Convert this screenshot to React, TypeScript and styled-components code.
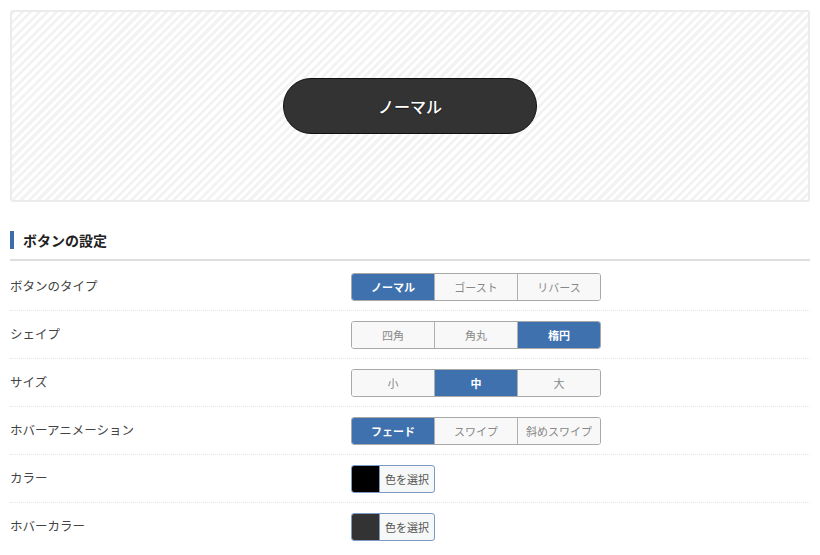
import React from 'react';
import styled, { createGlobalStyle } from 'styled-components';

const GlobalStyle = createGlobalStyle`
  html, body {
    margin: 0;
    padding: 0;
    background: #fff;
  }
  body {
    font-family: "Noto Sans CJK JP", "Noto Sans", sans-serif;
    color: #333;
  }
`;

type Option = { label: string; active?: boolean };

const SETTINGS: { label: string; options?: Option[]; color?: string }[] = [
  {
    label: 'ボタンのタイプ',
    options: [{ label: 'ノーマル', active: true }, { label: 'ゴースト' }, { label: 'リバース' }],
  },
  {
    label: 'シェイプ',
    options: [{ label: '四角' }, { label: '角丸' }, { label: '楕円', active: true }],
  },
  {
    label: 'サイズ',
    options: [{ label: '小' }, { label: '中', active: true }, { label: '大' }],
  },
  {
    label: 'ホバーアニメーション',
    options: [{ label: 'フェード', active: true }, { label: 'スワイプ' }, { label: '斜めスワイプ' }],
  },
  { label: 'カラー', color: '#000000' },
  { label: 'ホバーカラー', color: '#333333' },
];

const App = () => {
  return (
    <>
      <GlobalStyle />
      <Page>
        <Preview>
          <PreviewButton>ノーマル</PreviewButton>
        </Preview>
        <SectionTitle>ボタンの設定</SectionTitle>
        <List>
          {SETTINGS.map((row) => (
            <Row key={row.label}>
              <Label>{row.label}</Label>
              <Control>
                {row.options && (
                  <Segments>
                    {row.options.map((opt) => (
                      <Segment key={opt.label} $active={opt.active}>
                        {opt.label}
                      </Segment>
                    ))}
                  </Segments>
                )}
                {row.color && (
                  <ColorPicker>
                    <Swatch $color={row.color} />
                    <ColorText>色を選択</ColorText>
                  </ColorPicker>
                )}
              </Control>
            </Row>
          ))}
        </List>
      </Page>
    </>
  );
};

const Page = styled.div`
  padding: 10px 10px 0;
`;

const Preview = styled.div`
  height: 188px;
  border: 2px solid #ececec;
  border-radius: 3px;
  background: repeating-linear-gradient(
    -45deg,
    #ffffff 0,
    #ffffff 3px,
    #f3f3f3 3px,
    #f3f3f3 6px
  );
  display: flex;
  align-items: center;
  justify-content: center;
`;

const PreviewButton = styled.div`
  width: 254px;
  height: 56px;
  box-sizing: border-box;
  border: 1px solid #111;
  border-radius: 28px;
  background: #333;
  color: #fff;
  font-size: 16px;
  font-weight: 500;
  display: flex;
  align-items: center;
  justify-content: center;
  text-shadow: 0 1px 1px rgba(0, 0, 0, 0.6);
`;

const SectionTitle = styled.h2`
  margin: 28px 0 0;
  padding: 0 0 9px 13px;
  position: relative;
  font-size: 14px;
  font-weight: bold;
  line-height: 20px;
  color: #222;
  border-bottom: 2px solid #dedede;
  &::before {
    content: '';
    position: absolute;
    left: 0;
    top: 1px;
    width: 4px;
    height: 18px;
    background: #3b6ea8;
  }
`;

const List = styled.div`
  padding-top: 2px;
`;

const Row = styled.div`
  display: grid;
  grid-template-columns: 341px 1fr;
  align-items: center;
  padding: 10px 0 9px;
  border-bottom: 1px dotted #e4e4e4;
  &:last-child {
    border-bottom: none;
  }
`;

const Label = styled.div`
  font-size: 12.5px;
  color: #444;
  margin-top: -3px;
`;

const Control = styled.div`
  display: flex;
  align-items: center;
`;

const Segments = styled.div`
  display: flex;
  border: 1px solid #a8a8a8;
  border-radius: 3px;
  overflow: hidden;
`;

const Segment = styled.div<{ $active?: boolean }>`
  width: 82px;
  height: 26px;
  display: flex;
  align-items: center;
  justify-content: center;
  font-size: 11px;
  background: ${({ $active }) => ($active ? '#3e71ad' : '#f8f8f8')};
  color: ${({ $active }) => ($active ? '#fff' : '#888')};
  font-weight: ${({ $active }) => ($active ? 'bold' : 'normal')};
  & + & {
    border-left: 1px solid #b0b0b0;
  }
`;

const ColorPicker = styled.div`
  display: flex;
  height: 28px;
  box-sizing: border-box;
  border: 1px solid #7d9ac2;
  border-radius: 3px;
  overflow: hidden;
  background: #f6f7f7;
`;

const Swatch = styled.div<{ $color: string }>`
  width: 27px;
  background: ${({ $color }) => $color};
  border-right: 1px solid #7d9ac2;
`;

const ColorText = styled.div`
  width: 54px;
  display: flex;
  align-items: center;
  justify-content: center;
  font-size: 11px;
  color: #555;
`;

export default App;
